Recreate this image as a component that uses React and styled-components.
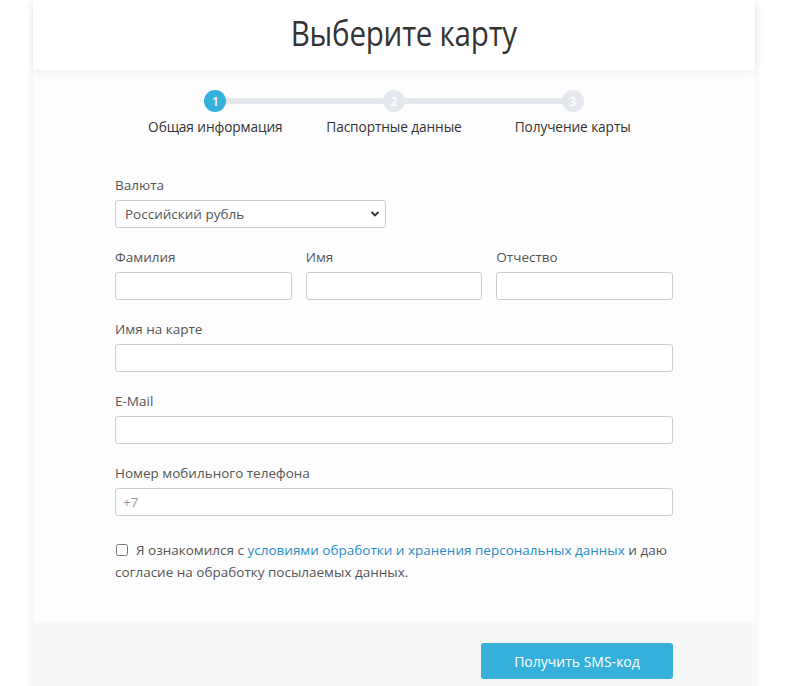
import React from "react";
import styled, { createGlobalStyle } from "styled-components";

const Global = createGlobalStyle`
  html, body { margin: 0; padding: 0; background: #ffffff; }
  body { font-family: "Open Sans", "Noto Sans", Arial, sans-serif; color: #555; }
  * { box-sizing: border-box; }
`;

const Page = styled.div`
  width: 800px;
  min-height: 686px;
  padding-left: 33px;
  overflow: hidden;
`;

const Card = styled.div`
  width: 722px;
  background: #fdfdfd;
  box-shadow: 0 0 10px rgba(0, 0, 0, 0.07);
`;

const Header = styled.header`
  height: 70px;
  background: #ffffff;
  display: flex;
  align-items: center;
  justify-content: center;
  padding-left: 20px;
  box-shadow: 0 3px 8px rgba(0, 0, 0, 0.05);
  position: relative;
  z-index: 1;
`;

const Title = styled.h1`
  margin: 0;
  font-family: "Open Sans", sans-serif;
  font-weight: 400;
  font-size: 35px;
  letter-spacing: -0.3px;
  color: #333;
  white-space: nowrap;
  transform: translateY(-3px) scaleX(0.845);
`;

const Body = styled.div`
  padding: 20px 82px 40px;
`;

const Steps = styled.ol`
  list-style: none;
  margin: 0 auto;
  padding: 0;
  width: 536px;
  display: grid;
  grid-template-columns: repeat(3, 1fr);
`;

const Step = styled.li`
  position: relative;
  display: flex;
  flex-direction: column;
  align-items: center;
  gap: 5px;
  &:not(:first-child)::before {
    content: "";
    position: absolute;
    top: 8px;
    left: -50%;
    width: 100%;
    height: 6px;
    background: #e4e8ee;
  }
`;

const Dot = styled.span`
  position: relative;
  z-index: 1;
  width: 22px;
  height: 22px;
  border-radius: 50%;
  background: ${(p) => (p.$active ? "#35b0da" : "#e4e8ee")};
  color: #fff;
  font-size: 12px;
  font-weight: 600;
  display: flex;
  align-items: center;
  justify-content: center;
`;

const StepLabel = styled.span`
  font-size: 13.7px;
  color: #333;
  white-space: nowrap;
  letter-spacing: -0.1px;
`;

const Form = styled.form`
  margin-top: 40px;
  display: flex;
  flex-direction: column;
  gap: 20px;
`;

const Row = styled.div`
  display: grid;
  grid-template-columns: ${(p) => p.$cols || "1fr"};
  gap: 14px;
`;

const Field = styled.label`
  display: flex;
  flex-direction: column;
  gap: 6px;
`;

const LabelText = styled.span`
  font-size: 13.5px;
  line-height: 18px;
  color: #555;
`;

const Input = styled.input`
  height: 28px;
  width: 100%;
  border: 1px solid #ccc;
  border-radius: 3px;
  background: #fff;
  padding: 0 7px;
  font-family: "Open Sans", sans-serif;
  font-size: 13.5px;
  color: #555;
  outline: none;
  &::placeholder { color: #999; }
`;

const SelectBox = styled.div`
  position: relative;
  width: 271px;
`;

const Select = styled.select`
  appearance: none;
  width: 100%;
  height: 28px;
  border: 1px solid #ccc;
  border-radius: 3px;
  background: #fff;
  padding: 0 24px 0 9px;
  font-family: "Open Sans", sans-serif;
  font-size: 13.5px;
  color: #555;
  outline: none;
`;

const Chevron = styled.svg`
  position: absolute;
  right: 6px;
  top: 10px;
  pointer-events: none;
`;

const Agree = styled.p`
  margin: 3px 0 0;
  font-size: 13.5px;
  line-height: 22px;
  color: #555;
`;

const Check = styled.input`
  width: 12px;
  height: 12px;
  margin: 0 8px 0 1px;
  vertical-align: -1px;
  accent-color: #555;
`;

const Link = styled.a`
  color: #2a8cc8;
  text-decoration: none;
`;

const Footer = styled.footer`
  background: #f7f7f7;
  padding: 20px 82px 20px;
  display: flex;
  justify-content: flex-end;
`;

const Button = styled.button`
  width: 192px;
  height: 36px;
  border: none;
  border-radius: 3px;
  background: #35b0da;
  color: #fff;
  font-family: "Open Sans", sans-serif;
  font-size: 14px;
  cursor: pointer;
`;

export default function App() {
  const steps = ["Общая информация", "Паспортные данные", "Получение карты"];
  return (
    <Page>
      <Global />
      <Card>
        <Header>
          <Title>Выберите карту</Title>
        </Header>
        <Body>
          <Steps>
            {steps.map((s, i) => (
              <Step key={s}>
                <Dot $active={i === 0}>{i + 1}</Dot>
                <StepLabel>{s}</StepLabel>
              </Step>
            ))}
          </Steps>
          <Form onSubmit={(e) => e.preventDefault()}>
            <Field>
              <LabelText>Валюта</LabelText>
              <SelectBox>
                <Select defaultValue="rub">
                  <option value="rub">Российский рубль</option>
                  <option value="usd">Доллар США</option>
                  <option value="eur">Евро</option>
                </Select>
                <Chevron width="10" height="8" viewBox="0 0 10 8">
                  <path d="M1.5 2 L5 5.5 L8.5 2" fill="none" stroke="#333" strokeWidth="1.8" />
                </Chevron>
              </SelectBox>
            </Field>
            <Row $cols="1fr 1fr 1fr">
              <Field>
                <LabelText>Фамилия</LabelText>
                <Input type="text" />
              </Field>
              <Field>
                <LabelText>Имя</LabelText>
                <Input type="text" />
              </Field>
              <Field>
                <LabelText>Отчество</LabelText>
                <Input type="text" />
              </Field>
            </Row>
            <Field>
              <LabelText>Имя на карте</LabelText>
              <Input type="text" />
            </Field>
            <Field>
              <LabelText>E-Mail</LabelText>
              <Input type="email" />
            </Field>
            <Field>
              <LabelText>Номер мобильного телефона</LabelText>
              <Input type="tel" placeholder="+7" />
            </Field>
            <Agree>
              <Check type="checkbox" />
              Я ознакомился с <Link href="#">условиями обработки и хранения персональных данных</Link> и даю
              согласие на обработку посылаемых данных.
            </Agree>
          </Form>
        </Body>
        <Footer>
          <Button type="button">Получить SMS-код</Button>
        </Footer>
      </Card>
    </Page>
  );
}
